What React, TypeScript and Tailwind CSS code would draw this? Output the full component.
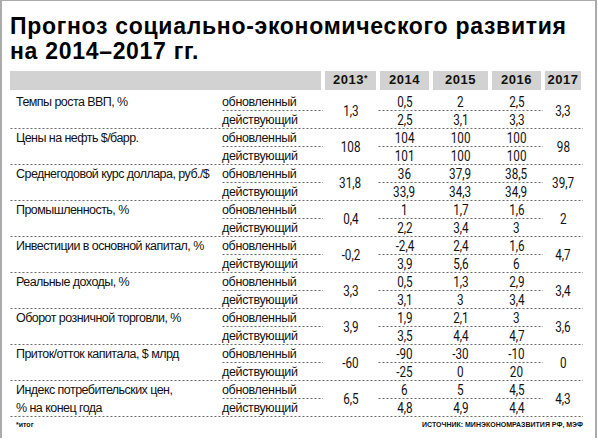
const rows = [
  { label: ["Темпы роста ВВП, %"], y13: "1,3", upd: ["0,5", "2", "2,5"], cur: ["2,5", "3,1", "3,3"], y17: "3,3" },
  { label: ["Цены на нефть $/барр."], y13: "108", upd: ["104", "100", "100"], cur: ["101", "100", "100"], y17: "98" },
  { label: ["Среднегодовой курс доллара, руб./$"], y13: "31,8", upd: ["36", "37,9", "38,5"], cur: ["33,9", "34,3", "34,9"], y17: "39,7" },
  { label: ["Промышленность, %"], y13: "0,4", upd: ["1", "1,7", "1,6"], cur: ["2,2", "3,4", "3"], y17: "2" },
  { label: ["Инвестиции в основной капитал, %"], y13: "-0,2", upd: ["-2,4", "2,4", "1,6"], cur: ["3,9", "5,6", "6"], y17: "4,7" },
  { label: ["Реальные доходы, %"], y13: "3,3", upd: ["0,5", "1,3", "2,9"], cur: ["3,1", "3", "3,4"], y17: "3,4" },
  { label: ["Оборот розничной торговли, %"], y13: "3,9", upd: ["1,9", "2,1", "3"], cur: ["3,5", "4,4", "4,7"], y17: "3,6" },
  { label: ["Приток/отток капитала, $ млрд"], y13: "-60", upd: ["-90", "-30", "-10"], cur: ["-25", "0", "20"], y17: "0" },
  { label: ["Индекс потребительских цен,", "% на конец года"], y13: "6,5", upd: ["6", "5", "4,5"], cur: ["4,8", "4,9", "4,4"], y17: "4,3" },
];

const years = ["2014", "2015", "2016"];

// dashed rule drawn as a repeating background along the bottom edge
const dash =
  "bg-[linear-gradient(to_right,#6b6b6b_2px,transparent_2px)] bg-[length:4px_1px] bg-repeat-x bg-bottom";

const cols = "grid grid-cols-[212px_101px_55px_53px_59px_53px_40px]";
const txt = "whitespace-nowrap text-[12.5px] leading-[18px] tracking-[-0.35px] text-[#111]";

const Num = ({ v }: { v: string }) => (
  <span className="inline-block scale-x-[0.78] font-['Roboto',sans-serif] text-[15px] leading-[18px] text-[#111]">
    {v}
  </span>
);

const Row = ({ r }: { r: (typeof rows)[number] }) => (
  <div className={`${cols} grid-rows-[18px_18px] ${dash}`}>
    <div className={`row-span-2 pl-[6px] ${txt} tracking-[-0.55px]`}>
      {r.label.map((l) => (
        <div key={l}>{l}</div>
      ))}
    </div>
    <div className={`col-start-2 row-start-1 ${txt} ${dash}`}>обновленный</div>
    <div className={`col-start-2 row-start-2 ${txt}`}>действующий</div>
    <div className="col-start-3 row-span-2 row-start-1 flex items-center justify-center">
      <Num v={r.y13} />
    </div>
    {r.upd.map((v, i) => (
      <div key={"u" + i} className={`row-start-1 flex justify-center ${dash}`} style={{ gridColumnStart: i + 4 }}>
        <Num v={v} />
      </div>
    ))}
    {r.cur.map((v, i) => (
      <div key={"c" + i} className="row-start-2 flex justify-center" style={{ gridColumnStart: i + 4 }}>
        <Num v={v} />
      </div>
    ))}
    <div className="col-start-7 row-span-2 row-start-1 flex items-center justify-center">
      <Num v={r.y17} />
    </div>
  </div>
);

export default function App() {
  return (
    <div className="h-[445px] w-[598px] bg-white font-['Liberation_Sans',Arial,sans-serif]">
      <div className="h-[438px] w-[597px] border-t border-r-2 border-l-2 border-[#ababab] pt-[13px] pl-[8px]">
        <h1 className="text-[23px] leading-[25px] font-bold tracking-[0.7px] text-black">
          Прогноз социально-экономического развития
          <br />
          на 2014–2017 гг.
        </h1>

        <div className={`${cols} mt-[7px] h-[18px] text-[13px] leading-[18px] font-bold tracking-[0.5px] text-[#111]`}>
          <div className="col-span-2 mr-[2px] bg-[#d2d2d2]" />
          <div className="mx-[2px] bg-[#d2d2d2] text-center">
            2013<span className="relative -top-[3px] text-[9px]">*</span>
          </div>
          {years.map((y) => (
            <div key={y} className="mx-[2px] bg-[#d2d2d2] text-center">
              {y}
            </div>
          ))}
          <div className="mx-[2px] bg-[#d2d2d2] text-center">2017</div>
        </div>

        <div className="mt-[4px] w-[573px]">
          {rows.map((r) => (
            <Row key={r.label[0]} r={r} />
          ))}
        </div>

        <div className="flex w-[573px] justify-between pt-[3px] text-[7px] leading-[9px] font-bold text-[#111]">
          <span className="pl-[6px]">*итог</span>
          <span>ИСТОЧНИК: МИНЭКОНОМРАЗВИТИЯ РФ, МЭФ</span>
        </div>
      </div>
    </div>
  );
}
